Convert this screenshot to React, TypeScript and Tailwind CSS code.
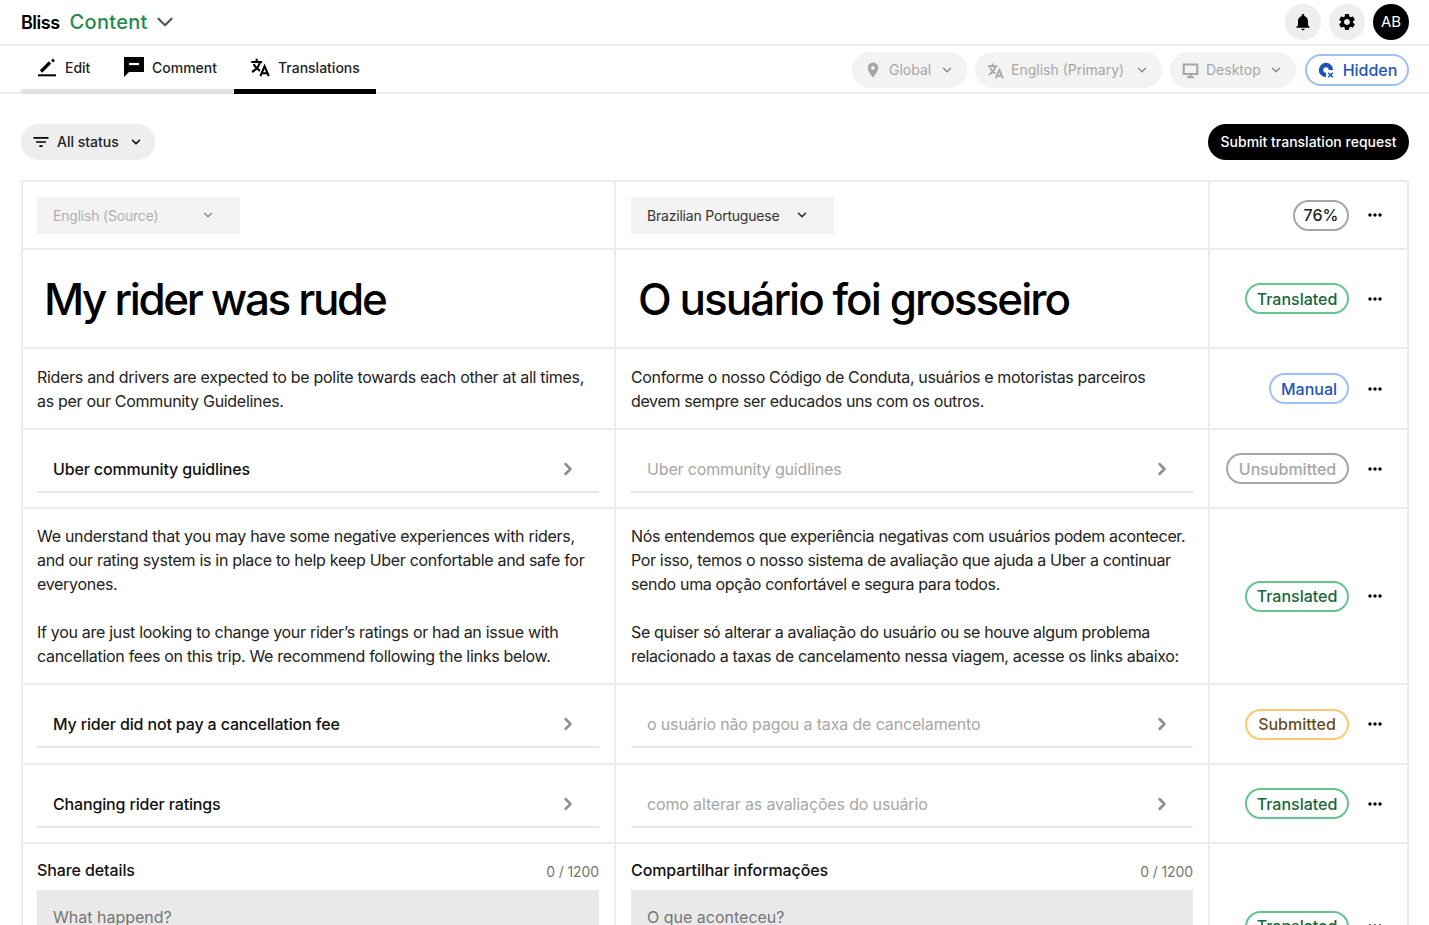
import { ChevronDown, ChevronRight } from 'lucide-react';
import { MdFilterList, MdLocationOn, MdMoreHoriz, MdNotifications, MdSettings } from 'react-icons/md';
import type { ReactNode } from 'react';

const tones: Record<string, string> = {
    neutral: 'w-[56px] border-[#a6a6a6] text-[#222222]',
    translated: 'w-[104px] border-[#66c48f] text-[#17663a]',
    manual: 'w-[80px] border-[#a0bff8] text-[#1e54b7]',
    unsubmitted: 'w-[123px] border-[#a6a6a6] text-[#a6a6a6]',
    submitted: 'w-[104px] border-[#ffc870] text-[#674d1b]',
};

const TranslateIcon = ({ className }: { className: string }) => (
    <svg viewBox="0 0 24 24" className={className} fill="none" stroke="currentColor" strokeWidth="2.5">
        <path d="M1.5 6h13M8 2v4M12 6c-1 5-4.500 9-9.500 12M4.500 8.500c1.500 3.500 4 6 7.500 8" />
        <path d="M12.500 23 17.500 11l5 12M14 19.500h7" />
    </svg>
);

const Status = ({ label, tone }: { label: string; tone: string }) => (
    <span className={`h-[31px] inline-flex items-center justify-center rounded-full border-2 text-[16px] font-medium leading-none whitespace-nowrap ${tones[tone]}`}>
        {label}
    </span>
);

const StatusCell = ({ label, tone }: { label: string; tone: string }) => (
    <div className="flex items-center justify-end pr-[22px] gap-[16px]">
        <Status label={label} tone={tone} />
        <MdMoreHoriz className="w-[20px] h-[20px] text-black shrink-0" />
    </div>
);

const Row = ({ height, left, right, status }: { height: string; left: ReactNode; right: ReactNode; status: ReactNode }) => (
    <div className={`grid grid-cols-[593px_594px_1fr] border-b-2 border-[#ececec] ${height}`}>
        <div className="border-r-2 border-[#ececec] min-w-0">{left}</div>
        <div className="pl-[1px] border-r-2 border-[#ececec] min-w-0">{right}</div>
        {status}
    </div>
);

const LangSelect = ({ label, muted }: { label: string; muted?: boolean }) => (
    <div className="h-full flex items-center pl-[14px] pr-[15px]">
        <div className={`w-[203px] h-[37px] pl-[16px] pr-[25px] bg-[#f3f3f3] flex items-center justify-between text-[14px] tracking-[-0.2px] ${muted ? 'text-[#afafaf]' : 'text-[#333333]'}`}>
            {label}
            <ChevronDown className={`w-[14px] h-[14px] ${muted ? 'text-[#8a8a8a]' : 'text-[#222222]'}`} strokeWidth={2.5} />
        </div>
    </div>
);

const Body = ({ children, tight }: { children: ReactNode; tight?: boolean }) => (
    <div className={`h-full pl-[14px] pr-[15px] flex flex-col justify-center text-[16px] leading-[24px] text-[#222222] ${tight ? 'tracking-[-0.35px]' : 'tracking-[-0.3px]'}`}>{children}</div>
);

const LinkCell = ({ label, muted }: { label: string; muted?: boolean }) => (
    <div className="h-full pl-[14px] pr-[15px] pt-[22px]">
        <div className={`h-[41px] pl-[16px] pr-[21px] border-b-2 border-[#e8e8e8] flex items-start justify-between text-[16px] leading-[34px] tracking-[-0.15px] ${muted ? 'text-[#a6a6a6] font-normal' : 'text-[#111111] font-medium'}`}>
            {label}
            <ChevronRight className="w-[20px] h-[20px] mt-[7px] text-[#8f8f8f]" strokeWidth={3} />
        </div>
    </div>
);

const Title = ({ children, className }: { children: ReactNode; className: string }) => (
    <div className={`h-full flex items-center text-[44px] leading-none font-medium text-black ${className}`}>{children}</div>
);

const Share = ({ label, placeholder }: { label: string; placeholder: string }) => (
    <div className="pl-[14px] pr-[15px] pt-[14px]">
        <div className="flex items-center justify-between h-[24px]">
            <span className="text-[16px] font-medium text-[#111111] tracking-[-0.1px]">{label}</span>
            <span className="text-[14px] text-[#757575] mt-[2px] tracking-[-0.1px]">0 / 1200</span>
        </div>
        <div className="mt-[8px] h-[80px] bg-[#e9e9e9] pl-[16px] pt-[15px] text-[16px] leading-[24px] text-[#757575]">{placeholder}</div>
    </div>
);

const TopPill = ({ icon, label, width }: { icon: ReactNode; label: string; width: string }) => (
    <div className={`h-[36px] ${width} pl-[12px] pr-[13px] rounded-full bg-[#f3f3f3] flex items-center justify-between text-[14px] text-[#a6a6a6]`}>
        <span className="flex items-center gap-[7px]">{icon}<span className="-mt-[1px]">{label}</span></span>
        <ChevronDown className="w-[14px] h-[14px] text-[#8a8a8a]" strokeWidth={2.5} />
    </div>
);

const App = () => {
    return (
        <div className="h-[925px] overflow-hidden bg-white font-['Inter','Liberation_Sans',sans-serif]">
            <header className="h-[46px] pl-[21px] pr-[20px] border-b-2 border-[#eeeeee] flex items-center justify-between">
                <div className="flex items-center">
                    <span className="text-[18px] font-semibold text-black tracking-[-0.5px]">Bliss</span>
                    <span className="ml-[10px] text-[20px] font-medium text-[#1f8a4c] tracking-[0.3px]">Content</span>
                    <ChevronDown className="ml-[4px] w-[26px] h-[26px] text-[#555555]" strokeWidth={2} />
                </div>
                <div className="flex items-center gap-[8px]">
                    <button className="w-[36px] h-[36px] rounded-full bg-[#eeeeee] flex items-center justify-center">
                        <MdNotifications className="w-[20px] h-[20px] text-black" />
                    </button>
                    <button className="w-[36px] h-[36px] rounded-full bg-[#eeeeee] flex items-center justify-center">
                        <MdSettings className="w-[20px] h-[20px] text-black" />
                    </button>
                    <div className="w-[36px] h-[36px] rounded-full bg-black text-white text-[15px] flex items-center justify-center">AB</div>
                </div>
            </header>

            <div className="h-[48px] pl-[21px] pr-[20px] border-b-2 border-[#eeeeee] flex items-start justify-between">
                <nav className="flex h-[48px] text-[14px] font-medium text-[#222222]">
                    <a className="w-[87px] pl-[16px] h-full flex items-start pt-[11px] gap-[8px] border-b-[5px] border-[#e2e2e2]" href="#">
                        <svg viewBox="0 0 20 20" className="w-[20px] h-[20px] text-black" fill="none" stroke="currentColor">
                            <path d="M4 14.500 13 5.500" strokeWidth="3.200" />
                            <path d="M15 2.500 17 4.500" strokeWidth="2.600" />
                            <path d="M1 18.300h18" strokeWidth="2" />
                        </svg>
                        <span className="leading-[20px] mt-[1px]">Edit</span>
                    </a>
                    <a className="w-[126px] pl-[16px] h-full flex items-start pt-[11px] gap-[8px] border-b-[5px] border-[#e2e2e2]" href="#">
                        <svg viewBox="0 0 20 20" className="w-[20px] h-[20px] text-black">
                            <path d="M0 0h20v15H5l-5 5V0Z" fill="currentColor" />
                            <path d="M5 7h10" stroke="#ffffff" strokeWidth="2.200" />
                        </svg>
                        <span className="leading-[20px] mt-[1px]">Comment</span>
                    </a>
                    <a className="w-[142px] pl-[16px] h-full flex items-start pt-[11px] gap-[8px] border-b-[5px] border-black" href="#">
                        <TranslateIcon className="w-[20px] h-[20px] text-black" />
                        <span className="leading-[20px] mt-[1px]">Translations</span>
                    </a>
                </nav>
                <div className="flex items-center gap-[8px] pt-[6px]">
                    <TopPill width="w-[115px]" label="Global" icon={<MdLocationOn className="w-[18px] h-[18px] text-[#a6a6a6]" />} />
                    <TopPill width="w-[187px]" label="English (Primary)" icon={<TranslateIcon className="w-[17px] h-[17px] text-[#a6a6a6]" />} />
                    <TopPill
                        width="w-[126px]"
                        label="Desktop"
                        icon={
                            <svg viewBox="0 0 20 20" className="w-[17px] h-[17px] text-[#a6a6a6]" fill="none" stroke="currentColor" strokeWidth="2.4">
                                <path d="M2 3h16v11H2z" />
                                <path d="M10 14v3M6 18h8" />
                            </svg>
                        }
                    />
                    <div className="h-[32px] w-[104px] ml-[1px] rounded-full border-2 border-[#a0bff8] flex items-center justify-center gap-[8px] text-[16px] font-medium text-[#1e54b7]">
                        <svg viewBox="0 0 20 20" className="w-[18px] h-[18px]">
                            <path d="M10 2a8 8 0 1 0 0 16 3 3 0 0 0 0-1V13a3 3 0 1 1 3-3h5a8 8 0 0 0-8-8Z" fill="#1e54b7" />
                            <path d="m12.5 13 5 5m0-5-5 5" stroke="#1e54b7" strokeWidth="1.8" />
                        </svg>
                        Hidden
                    </div>
                </div>
            </div>

            <div className="pl-[21px] pr-[20px] pt-[30px] pb-[21px] flex items-center justify-between">
                <button className="h-[36px] w-[134px] pl-[10px] rounded-full bg-[#eeeeee] flex items-center gap-[6px] text-[14px] font-medium text-[#222222] whitespace-nowrap">
                    <MdFilterList className="w-[20px] h-[20px] text-black" />
                    <span className="-mt-[1px]">All status</span>
                    <ChevronDown className="ml-[4px] w-[14px] h-[14px] text-black" strokeWidth={2.5} />
                </button>
                <button className="h-[36px] w-[201px] pb-[1px] rounded-full bg-black text-white text-[14px] font-medium">Submit translation request</button>
            </div>

            <div className="mx-[21px] mr-[20px] border-2 border-b-0 border-[#ececec] -mt-px">
                <Row
                    height="h-[68px]"
                    left={<LangSelect label="English (Source)" muted />}
                    right={<LangSelect label="Brazilian Portuguese" />}
                    status={<StatusCell label="76%" tone="neutral" />}
                />
                <Row
                    height="h-[99px]"
                    left={<Title className="pl-[21px] tracking-[-2.35px]">My rider was rude</Title>}
                    right={<Title className="pl-[21px] tracking-[-1.95px]">O usuário foi grosseiro</Title>}
                    status={<StatusCell label="Translated" tone="translated" />}
                />
                <Row
                    height="h-[81px]"
                    left={<Body>Riders and drivers are expected to be polite towards each other at all times, as per our Community Guidelines.</Body>}
                    right={<Body tight>Conforme o nosso Código de Conduta, usuários e motoristas parceiros devem sempre ser educados uns com os outros.</Body>}
                    status={<StatusCell label="Manual" tone="manual" />}
                />
                <Row
                    height="h-[79px]"
                    left={<LinkCell label="Uber community guidlines" />}
                    right={<LinkCell label="Uber community guidlines" muted />}
                    status={<StatusCell label="Unsubmitted" tone="unsubmitted" />}
                />
                <Row
                    height="h-[176px]"
                    left={
                        <Body>
                            <p>We understand that you may have some negative experiences with riders, and our rating system is in place to help keep Uber confortable and safe for everyones.</p>
                            <p className="mt-[24px]">If you are just looking to change your rider’s ratings or had an issue with cancellation fees on this trip. We recommend following the links below.</p>
                        </Body>
                    }
                    right={
                        <Body tight>
                            <p>Nós entendemos que experiência negativas com usuários podem acontecer. Por isso, temos o nosso sistema de avaliação que ajuda a Uber a continuar sendo uma opção confortável e segura para todos.</p>
                            <p className="mt-[24px]">Se quiser só alterar a avaliação do usuário ou se houve algum problema relacionado a taxas de cancelamento nessa viagem, acesse os links abaixo:</p>
                        </Body>
                    }
                    status={<StatusCell label="Translated" tone="translated" />}
                />
                <Row
                    height="h-[80px]"
                    left={<LinkCell label="My rider did not pay a cancellation fee" />}
                    right={<LinkCell label="o usuário não pagou a taxa de cancelamento" muted />}
                    status={<StatusCell label="Submitted" tone="submitted" />}
                />
                <Row
                    height="h-[79px]"
                    left={<LinkCell label="Changing rider ratings" />}
                    right={<LinkCell label="como alterar as avaliações do usuário" muted />}
                    status={<StatusCell label="Translated" tone="translated" />}
                />
                <Row
                    height="h-[166px]"
                    left={<Share label="Share details" placeholder="What happend?" />}
                    right={<Share label="Compartilhar informações" placeholder="O que aconteceu?" />}
                    status={<StatusCell label="Translated" tone="translated" />}
                />
            </div>
        </div>
    );
};

export default App;
